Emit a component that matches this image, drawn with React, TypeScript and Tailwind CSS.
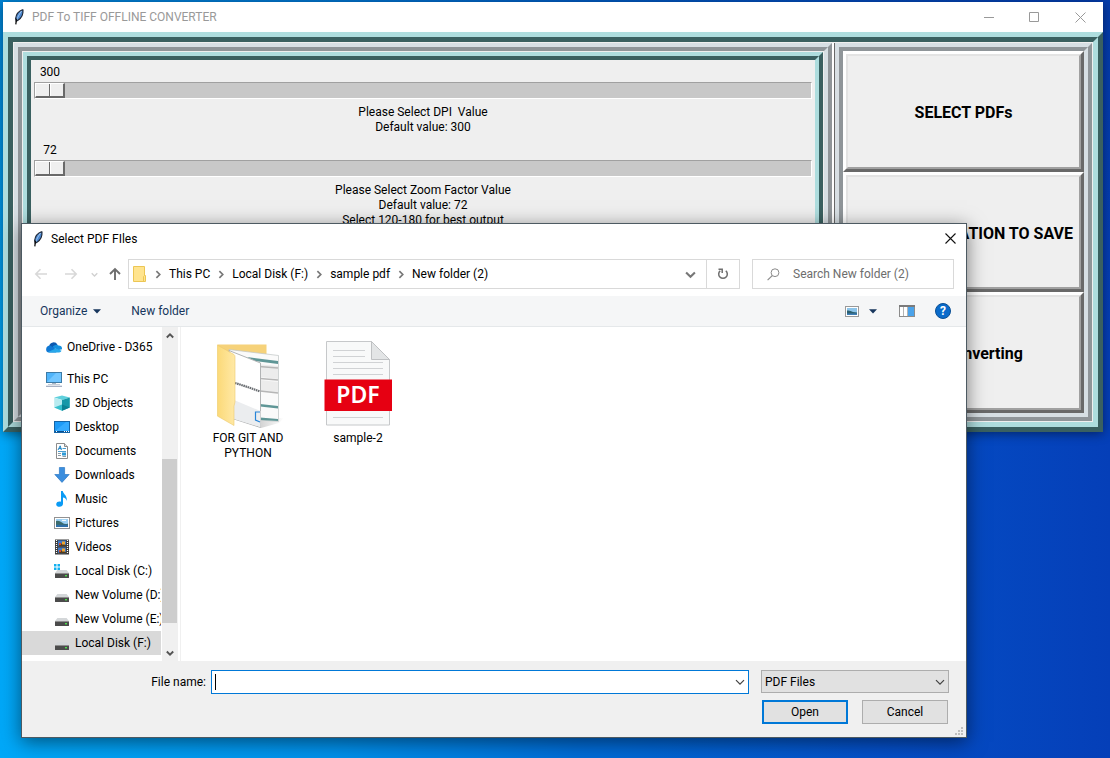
import { useState } from "react";
import type { ReactNode } from "react";

/* ---------- icons ---------- */

function Feather() {
  return (
    <svg width="16" height="16" viewBox="0 0 16 16" aria-hidden="true">
      <path d="M11.400 0.800 C8.600 1.800 5.200 5 4.600 9.600 L5.200 12.200 L6.600 11.600 C10 9.600 12.400 6 12 1 Z" fill="#4a86cf" stroke="#1a2230" strokeWidth="1.1" />
      <path d="M10.600 2 C8.600 4.500 7 7.500 5.600 11" stroke="#a9cdf2" strokeWidth="0.9" fill="none" />
      <path d="M5.600 9.600 L4.800 15.400" stroke="#111" strokeWidth="1.3" />
    </svg>
  );
}

function Chevron({ dir, color, size = 8, width = 1.5 }: { dir: "right" | "down" | "up"; color: string; size?: number; width?: number }) {
  const d = { right: "M3 1 L6 4 L3 7", down: "M0.8 2.5 L4 5.7 L7.2 2.5", up: "M0.8 5.5 L4 2.3 L7.2 5.5" }[dir];
  return (
    <svg width={size} height={size} viewBox="0 0 8 8" fill="none" aria-hidden="true" className="shrink-0">
      <path d={d} stroke={color} strokeWidth={width} />
    </svg>
  );
}

function Arrow({ dir, color, width = 1.6 }: { dir: "left" | "right" | "up"; color: string; width?: number }) {
  const d = {
    left: "M13 7 H2 M6.5 2.2 L1.8 7 L6.5 11.8",
    right: "M1 7 H12 M7.5 2.2 L12.2 7 L7.5 11.8",
    up: "M7 13 V2.4 M2 7 L7 2 L12 7",
  }[dir];
  return (
    <svg width="14" height="14" viewBox="0 0 14 14" fill="none" aria-hidden="true">
      <path d={d} stroke={color} strokeWidth={width} />
    </svg>
  );
}

function Triangle() {
  return (
    <svg width="8" height="5" viewBox="0 0 8 5" aria-hidden="true">
      <path d="M0 0.3 H8 L4 4.6 Z" fill="#17365d" />
    </svg>
  );
}

function CloudIcon() {
  return (
    <svg width="16" height="16" viewBox="0 0 16 16" aria-hidden="true">
      <path d="M3.2 7.2 A4.4 4.4 0 0 1 11.5 5.8 L8 10 Z" fill="#0c59b0" />
      <path d="M0.2 10 A3.3 3.3 0 0 1 5.4 7.2 L12 11.5 L10 13.4 H3 A3 3 0 0 1 0.2 10 Z" fill="#0f78d4" />
      <path d="M6.5 8 A4.3 4.3 0 0 1 12.6 6.6 A3.4 3.4 0 0 1 16 10.2 L12 11.2 Z" fill="#1490df" />
      <path d="M2 13 L9.8 9.6 L15.6 11.8 A2.8 2.8 0 0 1 13 13.4 H3.5 Z" fill="#28a8ea" />
    </svg>
  );
}

function PcIcon() {
  return (
    <svg width="16" height="16" viewBox="0 0 16 16" aria-hidden="true">
      <rect x="0.5" y="1.5" width="15" height="10" fill="#4fb4fa" stroke="#3d7ba6" />
      <path d="M1 11 L10 2 H15 V11 Z" fill="#72c6ff" />
      <path d="M6 12.5 H10" stroke="#a9b6c4" />
      <path d="M2 13.5 H14" stroke="#c6ced8" />
      <path d="M0 15.3 H16" stroke="#9da9bd" strokeWidth="1.2" />
    </svg>
  );
}

function CubeIcon() {
  return (
    <svg width="16" height="16" viewBox="0 0 16 16" aria-hidden="true">
      <path d="M8 0.4 L15.8 2.6 L8 5 L0.2 2.6 Z" fill="#5fd0dc" />
      <path d="M15.8 2.6 L8 5 V15.8 L15.8 12.6 Z" fill="#1598a8" />
      <path d="M0.2 2.6 L8 5 V15.8 L0.2 12.6 Z" fill="#b8ebf0" />
      <path d="M0.2 12.6 L8 9.6 V15.8 Z" fill="#36c0cd" />
      <path d="M8 9.6 L15.8 12.6 L8 15.8 Z" fill="#0a8193" />
    </svg>
  );
}

function DesktopIcon() {
  return (
    <svg width="16" height="16" viewBox="0 0 16 16" aria-hidden="true">
      <rect x="0.5" y="2.5" width="15" height="11" fill="#1e9bf7" stroke="#1565a8" />
      <path d="M1 12 L12 3 H15 V12 Z" fill="#35abff" />
      <path d="M1 12.5 H15" stroke="#0b4c8a" />
      <path d="M2 12.5 H3 M10 12.5 H11 M12 12.5 H13 M14 12.5 H15" stroke="#fff" />
    </svg>
  );
}

function DocumentIcon() {
  return (
    <svg width="16" height="16" viewBox="0 0 16 16" aria-hidden="true">
      <path d="M2.5 0.5 H10.5 L13.5 3.5 V15.5 H2.5 Z" fill="#fff" stroke="#8c8c8c" />
      <path d="M10.5 0.5 V3.5 H13.5" fill="#ddd" stroke="#8c8c8c" />
      <path d="M4 7 L6.2 2.8 L7.4 7 M5 5.6 H7.4" stroke="#1a82c4" fill="none" />
      <path d="M8.5 5.5 H12 M4 8.5 H12" stroke="#4b9ed0" />
      <path d="M4 10.5 H7 M4 12.5 H7 M8.5 13.5 H12" stroke="#8a9aa6" />
      <rect x="8" y="9.5" width="4" height="3" fill="#2f9bd8" />
    </svg>
  );
}

function DownloadIcon() {
  return (
    <svg width="16" height="16" viewBox="0 0 16 16" aria-hidden="true">
      <path d="M5.4 0.5 H10.6 V7.5 H15.2 L8 15.4 L0.8 7.5 H5.4 Z" fill="#3b8ede" stroke="#2d78c4" strokeWidth="0.7" />
    </svg>
  );
}

function MusicIcon() {
  return (
    <svg width="16" height="16" viewBox="0 0 16 16" aria-hidden="true">
      <path d="M7 0 H8.8 C9 3 13.8 4.6 12.6 10 C12.4 7.6 10.8 6.6 9 6.4 V12.8 C9 17 2 16.6 2.2 13 C2.4 10.6 5.4 10 7 10.8 Z" fill="#0a9bf5" />
    </svg>
  );
}

function PictureIcon() {
  return (
    <svg width="16" height="16" viewBox="0 0 16 16" aria-hidden="true">
      <rect x="0.5" y="2.5" width="15" height="11" fill="#fff" stroke="#929292" />
      <rect x="2" y="4" width="12" height="8" fill="#9cd0f3" />
      <path d="M2 6 Q5 5 8 7.5 T14 8.5 V10 H2 Z" fill="#3c6c6e" />
      <path d="M2 9.8 H14 V12 H2 Z" fill="#2e6fa8" />
      <path d="M8 5.4 H12" stroke="#fff" />
    </svg>
  );
}

function VideoIcon() {
  return (
    <svg width="16" height="16" viewBox="0 0 16 16" aria-hidden="true">
      <rect x="1" y="0.5" width="14" height="15" fill="#3c3c3c" />
      <path d="M2.5 1 V15 M13.5 1 V15" stroke="#fff" strokeWidth="1.200" strokeDasharray="1 1" />
      <rect x="4" y="1.5" width="8" height="6" fill="#3c78c8" />
      <rect x="4" y="8.5" width="8" height="6" fill="#3c78c8" />
      <path d="M4 7.5 L7 4.5 L12 6 V7.5 Z M4 14.5 L7 11.5 L12 13 V14.5 Z" fill="#503c1e" />
      <rect x="8" y="2.5" width="3" height="3" fill="#f0a52c" />
      <rect x="8" y="9.5" width="3" height="3" fill="#f0a52c" />
      <rect x="5" y="4" width="2" height="2" fill="#d84a2a" />
      <rect x="5" y="11" width="2" height="2" fill="#d84a2a" />
    </svg>
  );
}

function DriveIcon({ system = false }: { system?: boolean }) {
  return (
    <svg width="16" height="16" viewBox="0 0 16 16" aria-hidden="true">
      {system && <path d="M0 1 H2.5 V3.5 H0 Z M3.5 1 H6 V3.5 H3.5 Z M0 4.5 H2.5 V7 H0 Z M3.5 4.5 H6 V7 H3.5 Z" fill="#11b0f0" />}
      <path d="M3.4 7 H12.6 L15 10 H1 Z" fill="#d4d7d9" />
      <rect x="1" y="10" width="14" height="5" rx="0.6" fill="#4b4b4b" />
      <path d="M1 10.500 H15" stroke="#8d8d8d" />
      <rect x="11" y="12" width="2" height="1.4" fill="#4be04b" />
    </svg>
  );
}

function SmallFolder() {
  return (
    <svg width="14" height="16" viewBox="0 0 14 16" aria-hidden="true">
      <path d="M0.5 0.5 H11.5 V9.5 H12.5 V15.5 H0.5 Z" fill="#ffe48f" stroke="#ecc654" />
      <path d="M10.5 15 V10.5 L11.5 9.5" stroke="#ecc654" fill="none" />
    </svg>
  );
}

function BigFolder() {
  return (
    <svg width="68" height="86" viewBox="0 0 68 86" aria-hidden="true">
      <defs>
        <linearGradient id="flap" x1="0" y1="0" x2="1" y2="0">
          <stop offset="0" stopColor="#fbd978" />
          <stop offset="1" stopColor="#ffe9a6" />
        </linearGradient>
        <linearGradient id="cast" x1="0" y1="0" x2="1" y2="0">
          <stop offset="0" stopColor="#aaa" />
          <stop offset="1" stopColor="#fff" />
        </linearGradient>
      </defs>
      <path d="M44 74 L67 74 L62 79 L44 84 Z" fill="url(#cast)" opacity="0.5" />
      <path d="M0.5 0.500 H49.5 V76 H18 Z" fill="#f6d27a" />
      <path d="M12 5.500 L61.5 11.500 V77.500 L18 74 Z" fill="#fafafa" stroke="#bfc4c4" strokeWidth="0.7" />
      <path d="M30 13 L61 17 V20 L38 17 Z M43 60 L61 62 V64.500 L43 62.500 Z M43 73.500 L61 75 V77 L43 76 Z" fill="#5f9696" />
      <path d="M40 20 L61 22 V35 L43 33 Z M43 36 L61 38 V49 L43 47 Z" fill="#ececec" />
      <path d="M42 22.500 L61 24 M43 34.500 L61 36 M43 47 L61 49" stroke="#b6b6b6" strokeWidth="1.600" />
      <path d="M12 6.500 L43.500 19 V83.500 L17 75 Z" fill="#fff" stroke="#a9abad" strokeWidth="0.9" />
      <path d="M17 56 L43.500 67 V83 L17 75 Z" fill="#ebedef" />
      <path d="M18 39 L26 41.500 L32 43.500 L43 47.500" stroke="#6a6e72" strokeWidth="2.200" strokeDasharray="1.600 0.600" fill="none" />
      <path d="M43 68 H38.500 V76 L43 78" fill="none" stroke="#2684d8" strokeWidth="1.200" />
      <path d="M0.300 1 L17 10.500 Q18 11.200 18 13 V58 L17 62 V81.500 L0.300 72 Z" fill="url(#flap)" stroke="#edca6c" strokeWidth="0.600" />
    </svg>
  );
}

function PdfIcon() {
  return (
    <svg width="68" height="85" viewBox="0 0 68 85" aria-hidden="true">
      <path d="M2.500 0.500 H47.500 L65.500 18.500 V84 H2.500 Z" fill="#f8f9f9" stroke="#c6c8ca" />
      <path d="M47.500 0.500 V18.500 H65.500 Z" fill="#e3e5e6" stroke="#bfc1c3" />
      <path d="M9 9.500 H41 M9 15.500 H41 M9 21.500 H59 M9 27.500 H59 M9 33.500 H59 M9 76.500 H59" stroke="#d0d2d4" />
      <rect x="0.500" y="38.500" width="67.500" height="31.500" fill="#e60012" />
      <text x="34" y="62" textAnchor="middle" fill="#fff" fontFamily="Noto Sans, sans-serif" fontSize="23" fontWeight="600">PDF</text>
    </svg>
  );
}

/* ---------- main window ---------- */

type Tone = "teal" | "gray";
const outerTone: Record<Tone, string> = {
  teal: "border-t-[#aeddde] border-l-[#aeddde] border-r-[#3a6060] border-b-[#3a6060]",
  gray: "border-t-[#d7dfe4] border-l-[#d7dfe4] border-r-[#8f9599] border-b-[#8f9599]",
};
const innerTone: Record<Tone, string> = {
  teal: "border-t-[#3a6060] border-l-[#3a6060] border-r-[#aeddde] border-b-[#aeddde]",
  gray: "border-t-[#8f9599] border-l-[#8f9599] border-r-[#d7dfe4] border-b-[#d7dfe4]",
};

function Ridge({ tone, thick = false, className = "", children }: { tone: Tone; thick?: boolean; className?: string; children: ReactNode }) {
  const width = thick ? "border-[5px]" : "border-4";
  return (
    <div className={`flex min-w-0 ${width} ${outerTone[tone]} ${className}`}>
      <div className={`flex min-w-0 flex-1 ${width} ${innerTone[tone]}`}>{children}</div>
    </div>
  );
}

function Scale({ id, initial, min, max, lines }: { id: string; initial: number; min: number; max: number; lines: string[] }) {
  const [value, setValue] = useState(initial);
  return (
    <div className="px-[3px] pt-1 pb-[3px]">
      <output htmlFor={id} className="block h-[18px] w-8 text-center leading-[17px]">{value}</output>
      <input
        id={id}
        type="range"
        min={min}
        max={max}
        value={value}
        onChange={(e) => setValue(Number(e.target.value))}
        className="block h-[17px] w-full appearance-none border border-t-[#a0a0a0] border-r-white border-b-white border-l-[#a0a0a0] bg-[#c8c8c8] outline-none [&::-webkit-slider-thumb]:h-[15px] [&::-webkit-slider-thumb]:w-[30px] [&::-webkit-slider-thumb]:appearance-none [&::-webkit-slider-thumb]:border-t [&::-webkit-slider-thumb]:border-r-2 [&::-webkit-slider-thumb]:border-b-2 [&::-webkit-slider-thumb]:border-l [&::-webkit-slider-thumb]:border-t-white [&::-webkit-slider-thumb]:border-r-[#696969] [&::-webkit-slider-thumb]:border-b-[#696969] [&::-webkit-slider-thumb]:border-l-white [&::-webkit-slider-thumb]:bg-[linear-gradient(90deg,#efefef_13px,#696969_13px,#696969_14px,#fff_14px,#fff_15px,#efefef_15px)]"
      />
      <label htmlFor={id} className="mt-[6px] block text-center leading-[15px] whitespace-pre">
        {lines.join("\n")}
      </label>
    </div>
  );
}

function BigButton({ children }: { children: ReactNode }) {
  return (
    <button className="flex min-h-0 flex-1 border-[3px] border-t-white border-r-[#696969] border-b-[#696969] border-l-white text-base font-bold text-black">
      <span className="flex h-full flex-1 items-center justify-center border-2 border-t-[#e3e3e3] border-r-[#a0a0a0] border-b-[#a0a0a0] border-l-[#e3e3e3] bg-[#efefef] pt-[3px] whitespace-nowrap">
        {children}
      </span>
    </button>
  );
}

function MainWindow() {
  return (
    <section className="absolute top-[2px] right-[7px] left-[3px] flex flex-col bg-[#efefef] shadow-[0_2px_10px_rgba(0,0,0,0.45)]">
      <header className="flex h-[30px] items-center bg-white pl-2">
        <Feather />
        <h1 className="ml-[5px] flex-1 text-[#999]">PDF To TIFF OFFLINE CONVERTER</h1>
        <div className="flex">
          <button aria-label="Minimize" className="grid h-[30px] w-[46px] place-items-center">
            <svg width="11" height="11" viewBox="0 0 11 11"><path d="M1 5.500 H11" stroke="#999" /></svg>
          </button>
          <button aria-label="Maximize" className="grid h-[30px] w-[46px] place-items-center">
            <svg width="11" height="11" viewBox="0 0 11 11"><path d="M0.500 0.500 H9.500 V9.500 H0.500 Z" stroke="#999" fill="none" /></svg>
          </button>
          <button aria-label="Close" className="grid h-[30px] w-[46px] place-items-center">
            <svg width="11" height="11" viewBox="0 0 11 11"><path d="M0.500 0.500 L10.500 10.500 M10.500 0.500 L0.500 10.500" stroke="#999" /></svg>
          </button>
        </div>
      </header>
      <Ridge tone="teal" thick>
        <div className="flex flex-1 p-px">
          <Ridge tone="gray" className="flex-1">
            <div className="flex flex-1 p-px">
              <Ridge tone="teal" className="flex-1">
                <div className="flex-1">
                  <Scale id="dpi" initial={300} min={300} max={1200} lines={["Please Select DPI  Value", "Default value: 300"]} />
                  <Scale
                    id="zoom"
                    initial={72}
                    min={72}
                    max={300}
                    lines={["Please Select Zoom Factor Value", "Default value: 72", "Select 120-180 for best output"]}
                  />
                </div>
              </Ridge>
            </div>
          </Ridge>
          <div className="w-[3px] border-r border-r-[#696969] bg-white" />
          <Ridge tone="gray" className="w-[257px]">
            <div className="flex h-[362px] flex-1 flex-col">
              <BigButton>SELECT PDFs</BigButton>
              <BigButton>SELECT A LOCATION TO SAVE</BigButton>
              <BigButton>Start Converting</BigButton>
            </div>
          </Ridge>
        </div>
      </Ridge>
    </section>
  );
}

/* ---------- file dialog ---------- */

const places: { name: string; icon: ReactNode; selected?: boolean }[] = [
  { name: "3D Objects", icon: <CubeIcon /> },
  { name: "Desktop", icon: <DesktopIcon /> },
  { name: "Documents", icon: <DocumentIcon /> },
  { name: "Downloads", icon: <DownloadIcon /> },
  { name: "Music", icon: <MusicIcon /> },
  { name: "Pictures", icon: <PictureIcon /> },
  { name: "Videos", icon: <VideoIcon /> },
  { name: "Local Disk (C:)", icon: <DriveIcon system /> },
  { name: "New Volume (D:)", icon: <DriveIcon /> },
  { name: "New Volume (E:)", icon: <DriveIcon /> },
  { name: "Local Disk (F:)", icon: <DriveIcon />, selected: true },
];

const crumbs = ["This PC", "Local Disk (F:)", "sample pdf", "New folder (2)"];

function Sidebar() {
  return (
    <nav className="flex h-[334px] w-[159px] shrink-0 border-r border-[#f0f0f0]" aria-label="Places">
      <div className="mr-px w-[139px] overflow-hidden pt-2">
        <button className="flex h-6 w-full items-center gap-[5px] pl-6 whitespace-nowrap"><CloudIcon />OneDrive - D365</button>
        <button className="mt-2 flex h-6 w-full items-center gap-[5px] pl-6 whitespace-nowrap"><PcIcon />This PC</button>
        {places.map((p) => (
          <button key={p.name} className={`flex h-6 w-full items-center gap-[5px] pl-8 whitespace-nowrap ${p.selected ? "bg-[#d9d9d9]" : ""}`}>
            <span className="shrink-0">{p.icon}</span>
            {p.name}
          </button>
        ))}
      </div>
      <div className="flex w-4 flex-col bg-[#f0f0f0]">
        <button aria-label="Scroll up" className="grid h-[17px] place-items-center"><Chevron dir="up" color="#555" width={1.9} /></button>
        <div className="mt-[115px] mr-px h-[164px] bg-[#cdcdcd]" />
        <button aria-label="Scroll down" className="mt-auto grid h-[17px] place-items-center"><Chevron dir="down" color="#555" width={1.9} /></button>
      </div>
    </nav>
  );
}

function FileDialog() {
  return (
    <section
      role="dialog"
      aria-labelledby="dialog-title"
      className="absolute top-[223px] right-[143px] left-[21px] flex flex-col border border-[#4d5a62] bg-white shadow-[0_4px_18px_rgba(0,0,0,0.5)]"
    >
      <header className="flex h-[30px] items-center pl-2">
        <Feather />
        <h2 id="dialog-title" className="ml-[5px] flex-1">Select PDF FIles</h2>
        <button aria-label="Close dialog" className="grid h-[30px] w-[31px] place-items-center pb-px">
          <svg width="11" height="11" viewBox="0 0 11 11"><path d="M0.500 0.500 L10.500 10.500 M10.500 0.500 L0.500 10.500" stroke="#111" strokeWidth="1.100" /></svg>
        </button>
      </header>

      <div className="flex h-[42px] items-center pt-[5px] pr-3 pb-[7px] pl-3">
        <button aria-label="Back"><Arrow dir="left" color="#d8d8d8" /></button>
        <button aria-label="Forward" className="ml-4"><Arrow dir="right" color="#d8d8d8" /></button>
        <button aria-label="Recent locations" className="ml-[13px]"><Chevron dir="down" color="#d0d0d0" size={7} /></button>
        <button aria-label="Up" className="ml-[10px]"><Arrow dir="up" color="#6e6e6e" width={1.9} /></button>
        <div className="ml-[6px] flex h-[30px] flex-1 border border-[#d9d9d9]">
          <div className="flex flex-1 items-center pl-1">
            <SmallFolder />
            {crumbs.map((c) => (
              <span key={c} className="flex items-center whitespace-nowrap">
                <span className="mr-[7px] ml-[6px]"><Chevron dir="right" color="#777" size={9} /></span>
                <a href="#" className="text-black">{c}</a>
              </span>
            ))}
          </div>
          <button aria-label="Previous locations" className="grid w-[31px] place-items-center"><Chevron dir="down" color="#777" size={11} /></button>
          <button aria-label="Refresh" className="grid w-[33px] place-items-center border-l border-[#d9d9d9]">
            <svg width="12" height="12" viewBox="0 0 12 12" fill="none">
              <path d="M8.800 2.800 A4.300 4.300 0 1 1 3.200 2.800" stroke="#6e6e6e" strokeWidth="1.500" />
              <path d="M1.500 1.200 H5.200 V5" stroke="#6e6e6e" strokeWidth="1.500" />
            </svg>
          </button>
        </div>
        <div className="ml-3 flex h-[30px] w-[202px] items-center border border-[#d9d9d9] pl-[14px]">
          <svg width="13" height="13" viewBox="0 0 13 13" fill="none" aria-hidden="true">
            <circle cx="8" cy="4.700" r="3.900" stroke="#8a8a8a" />
            <path d="M5.200 7.600 L0.600 12.200" stroke="#8a8a8a" strokeWidth="1.200" />
          </svg>
          <input aria-label="Search" placeholder="Search New folder (2)" className="ml-[13px] w-[150px] outline-none placeholder:text-[#6d6d6d]" />
        </div>
      </div>

      <div className="flex h-[31px] items-center border-b border-[#e5e8ea] bg-[#f5f6f7] pr-[15px] pl-[18px] text-[#17365d]">
        <button className="flex items-center gap-[6px]">Organize <Triangle /></button>
        <button className="ml-[30px]">New folder</button>
        <button aria-label="Change view" className="ml-auto">
          <svg width="14" height="11" viewBox="0 0 14 11">
            <rect x="0.500" y="0.500" width="13" height="10" fill="#fff" stroke="#999" />
            <rect x="2" y="2" width="10" height="7" fill="#8cc4ea" />
            <path d="M2 4.500 Q5 4 8 6 L12 6.500 V9 H2 Z" fill="#2c6070" />
            <path d="M2 7.500 H12 V9 H2 Z" fill="#3f7fb8" />
          </svg>
        </button>
        <button aria-label="More view options" className="ml-[10px]"><Triangle /></button>
        <button aria-label="Preview pane" className="ml-[22px]">
          <svg width="16" height="12" viewBox="0 0 16 12">
            <rect x="0.500" y="0.500" width="15" height="11" fill="#fff" stroke="#8c8c8c" />
            <path d="M0 1 H16" stroke="#7b7b7b" strokeWidth="2" />
            <path d="M4.500 2 V11 M8.500 2 V11" stroke="#b5b5b5" />
            <rect x="9" y="2" width="6" height="9" fill="#4ba3ea" />
          </svg>
        </button>
        <button aria-label="Help" className="ml-5 grid h-4 w-4 place-items-center rounded-full border border-[#0a4f94] bg-[#0a6bcb] text-xs leading-none font-bold text-white">?</button>
      </div>

      <div className="flex">
        <Sidebar />
        <div className="flex flex-1 items-start pt-[14px] pl-[12px]">
          <button className="flex w-[110px] flex-col items-center pt-[3px]">
            <span className="ml-[6px]"><BigFolder /></span>
            <span className="mt-px w-[90px] leading-[15px]">FOR GIT AND PYTHON</span>
          </button>
          <button className="flex w-[110px] flex-col items-center">
            <PdfIcon />
            <span className="mt-[5px] leading-[15px]">sample-2</span>
          </button>
        </div>
      </div>

      <footer className="relative h-[76px] bg-[#f0f0f0] pt-[9px] pr-[17px]">
        <div className="flex items-start">
          <label htmlFor="file-name" className="w-[184px] text-right leading-6">File name:</label>
          <div className="ml-[5px] flex h-6 flex-1 items-center border border-[#0078d7] bg-white pr-[3px]">
            <span className="ml-[3px] h-4 w-px bg-black" />
            <input id="file-name" className="h-full min-w-0 flex-1 outline-none" />
            <Chevron dir="down" color="#444" size={10} width={1} />
          </div>
          <div className="relative ml-3 flex w-[188px] items-center">
            <select aria-label="File type" className="h-[23px] w-full appearance-none border border-[#adadad] bg-[#e1e1e1] pl-[3px] outline-none">
              <option>PDF Files</option>
            </select>
            <span className="pointer-events-none absolute right-1"><Chevron dir="down" color="#444" size={10} width={1} /></span>
          </div>
        </div>
        <div className="mt-[6px] mr-px flex justify-end gap-[14px]">
          <button className="h-6 w-[86px] border-2 border-[#0078d7] bg-[#e1e1e1]">Open</button>
          <button className="h-6 w-[86px] border border-[#adadad] bg-[#e1e1e1]">Cancel</button>
        </div>
        <svg width="8" height="8" viewBox="0 0 8 8" className="absolute right-[3px] bottom-[2px]" aria-hidden="true">
          <path d="M6 0 H8 V2 H6 Z M3 3 H5 V5 H3 Z M6 3 H8 V5 H6 Z M0 6 H2 V8 H0 Z M3 6 H5 V8 H3 Z M6 6 H8 V8 H6 Z" fill="#bfbfbf" />
        </svg>
      </footer>
    </section>
  );
}

export default function App() {
  return (
    <main className="relative min-h-screen overflow-hidden bg-[linear-gradient(180deg,rgba(0,50,140,0.3)_0%,rgba(0,50,140,0)_45%),linear-gradient(90deg,#00a8f8_0%,#0090ea_30%,#006cd6_52%,#0450c8_78%,#053fb8_100%)] font-[Roboto,sans-serif] text-xs text-black">
      <MainWindow />
      <FileDialog />
    </main>
  );
}
